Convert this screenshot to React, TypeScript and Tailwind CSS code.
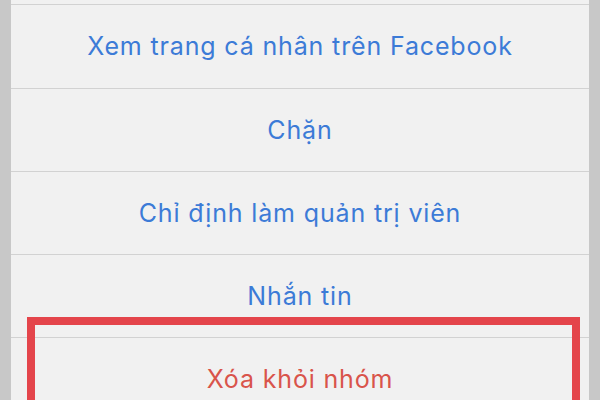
import React from "react";

const items: { label: string; danger?: boolean }[] = [
  { label: "Xem trang cá nhân trên Facebook" },
  { label: "Chặn" },
  { label: "Chỉ định làm quản trị viên" },
  { label: "Nhắn tin" },
  { label: "Xóa khỏi nhóm", danger: true },
];

export default function App() {
  return (
    <div className="w-[600px] h-[400px] overflow-hidden bg-[#c8c8c8] px-[11px] font-['Inter','Liberation_Sans',Arial,sans-serif]">
      <div className="relative h-full bg-[#f1f1f1] pt-[4px]">
        <ul className="border-t border-[#d2d2d2]">
          {items.map((item, i) => (
            <li
              key={item.label}
              className={`${i === 0 ? "h-[84px]" : "h-[83px]"} border-b border-[#d2d2d2] flex items-center justify-center`}
            >
              <span
                className={`text-[25px] leading-none tracking-[0.85px] ${
                  item.danger ? "text-[#d9544b]" : "text-[#3c7bd7]"
                }`}
              >
                {item.label}
              </span>
            </li>
          ))}
        </ul>
        {/* highlight annotation */}
        <div className="absolute left-[16px] right-[9px] top-[317px] h-[120px] border-[8px] border-[#e4454b]" />
      </div>
    </div>
  );
}
